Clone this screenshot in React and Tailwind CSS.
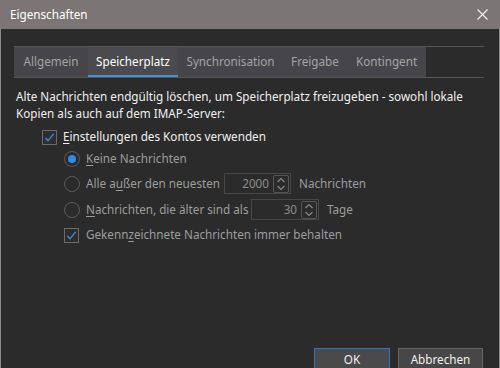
import React from "react";

const font = { fontFamily: '"Noto Sans", "Open Sans", sans-serif' };

function Check() {
  return (
    <div className="w-[15px] h-[15px] border border-[#6b6b6b] bg-[#2d2d2d] flex items-center justify-center shrink-0">
      <svg width="11" height="11" viewBox="0 0 11 11">
        <path d="M1.5 6 L4 8.8 L9.6 1.8" fill="none" stroke="#3d8ee8" strokeWidth="1.3" />
      </svg>
    </div>
  );
}

function Radio({ on }) {
  return (
    <div className="w-[16px] h-[16px] rounded-full border border-[#5c5c5c] flex items-center justify-center shrink-0">
      {on && <div className="w-[8px] h-[8px] rounded-full bg-[#2e8ae6]" />}
    </div>
  );
}

function Spin({ value, w }) {
  return (
    <div className={`${w} h-[21px] border border-[#474747] flex items-center justify-end pr-[1px] shrink-0`}>
      <span className="text-[#8c8c8c] pr-[4px]">{value}</span>
      <div className="w-[16px] h-[18px] border border-[#555] rounded-[2px] flex flex-col items-center justify-center">
        <svg width="10" height="16" viewBox="0 0 10 16">
          <path d="M1.5 6 L5 2.5 L8.5 6" fill="none" stroke="#8a8a8a" strokeWidth="1.2" />
          <path d="M1.5 10 L5 13.5 L8.5 10" fill="none" stroke="#8a8a8a" strokeWidth="1.2" />
        </svg>
      </div>
    </div>
  );
}

export default function App() {
  const tabs = [
    ["Allgemein", "w-[74px]"],
    ["Speicherplatz", "w-[90px]"],
    ["Synchronisation", "w-[105px]"],
    ["Freigabe", "w-[64px]"],
    ["Kontingent", "w-[79px]"],
  ];
  return (
    <div className="w-[500px] h-[368px] bg-[#2b2b2b] overflow-hidden flex flex-col text-[11.7px]" style={font}>
      <div className="h-[29px] bg-[#7b7675] flex items-center justify-between pl-[10px] pr-[12px] shrink-0">
        <span className="text-white">Eigenschaften</span>
        <svg width="11" height="11" viewBox="0 0 11 11">
          <path d="M0.5 0.5 L10.5 10.5 M10.5 0.5 L0.5 10.5" stroke="#f2f2f2" strokeWidth="1.1" />
        </svg>
      </div>
      <div className="flex-1 flex flex-col border-x border-[#8a8a8a] pl-[13px] pr-[15px]">
        <div className="mt-[17px] h-[32px] border-y border-[#575757] flex">
          {tabs.map(([t, w], i) => (
            <div
              key={t}
              className={`${w} h-full flex items-center justify-center relative ${
                i === 1 ? "bg-[#4b4b4f] text-white" : "bg-[#46464a] text-[#a3a3a3]"
              }`}
            >
              {t}
              {i === 1 && <div className="absolute left-0 right-0 bottom-0 h-[2px] bg-[#4a8fd4]" />}
            </div>
          ))}
        </div>
        <div className="pl-[2px] mt-[10px] leading-[17px] text-[#f0f0f0] whitespace-nowrap">
          Alte Nachrichten endgültig löschen, um Speicherplatz freizugeben - sowohl lokale
          <br />
          Kopien als auch auf dem IMAP-Server:
        </div>
        <div className="pl-[28px] mt-[5px] h-[20px] flex items-center gap-[6px] text-[#f0f0f0]">
          <Check />
          <span>
            <u className="underline-offset-2">E</u>instellungen des Kontos verwenden
          </span>
        </div>
        <div className="pl-[50px] text-[#9d9d9d] whitespace-nowrap">
          <div className="mt-[2px] h-[20px] flex items-center gap-[6px]">
            <Radio on />
            <span>
              <u className="underline-offset-2">K</u>eine Nachrichten
            </span>
          </div>
          <div className="mt-[4px] h-[21px] flex items-center">
            <Radio />
            <span className="w-[144px] pl-[6px]">
              Alle a<u className="underline-offset-2">u</u>ßer den neuesten
            </span>
            <Spin value="2000" w="w-[67px]" />
            <span className="pl-[8px]">Nachrichten</span>
          </div>
          <div className="mt-[5px] h-[21px] flex items-center">
            <Radio />
            <span className="w-[171px] pl-[6px]">
              <u className="underline-offset-2">N</u>achrichten, die älter sind als
            </span>
            <Spin value="30" w="w-[68px]" />
            <span className="pl-[8px]">Tage</span>
          </div>
          <div className="mt-[5px] h-[20px] flex items-center gap-[7px]">
            <Check />
            <span>
              Gekenn<u className="underline-offset-2">z</u>eichnete Nachrichten immer behalten
            </span>
          </div>
        </div>
        <div className="mt-auto h-[20px] flex items-start justify-end gap-[8px] pr-[1px]">
          <button className="w-[76px] h-[24px] shrink-0 bg-[#4a4a4a] border border-[#2f73c4] text-[#f0f0f0]">
            OK
          </button>
          <button className="w-[85px] h-[24px] shrink-0 bg-[#474747] border border-[#666] text-[#f0f0f0]">
            Abbrechen
          </button>
        </div>
      </div>
    </div>
  );
}
